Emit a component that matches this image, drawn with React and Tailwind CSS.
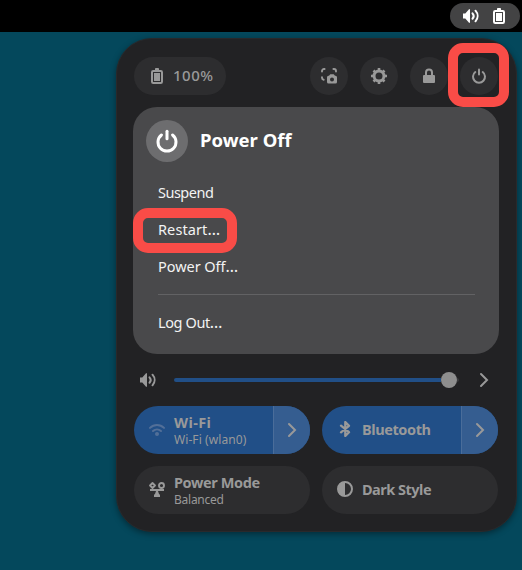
import React from 'react';

function Svg({ size = 16, className = '', children }) {
  return (
    <svg width={size} height={size} viewBox="0 0 16 16" fill="none" className={'shrink-0 ' + className}>
      {children}
    </svg>
  );
}

function VolumeIcon(props) {
  return (
    <Svg {...props}>
      <path d="M0 5.500h2.300L6 1.200h1v13.600H6L2.300 10.500H0z" fill="currentColor" />
      <path d="M9.500 5.300a4 4 0 0 1 0 5.400M12.500 2.700c2.800 3.100 2.800 7.500 0 10.600" stroke="currentColor" strokeWidth="2" strokeLinecap="round" />
    </Svg>
  );
}

function BatteryIcon(props) {
  return (
    <Svg {...props}>
      <rect x="6" y="0" width="4" height="3" rx="0.8" fill="currentColor" />
      <rect x="3" y="3" width="10" height="12" rx="1.200" stroke="currentColor" strokeWidth="2" />
      <rect x="5" y="5" width="6" height="8" fill="currentColor" />
    </Svg>
  );
}

function PowerIcon(props) {
  return (
    <Svg {...props}>
      <path d="M4.300 4a6 6 0 1 0 7.400 0" stroke="currentColor" strokeWidth="2" strokeLinecap="round" />
      <path d="M8 1.500v5" stroke="currentColor" strokeWidth="2" strokeLinecap="round" />
    </Svg>
  );
}

function ScreenshotIcon(props) {
  return (
    <Svg {...props}>
      <path d="M1 3.600V3a2 2 0 0 1 2-2h.6M12.400 1h.6a2 2 0 0 1 2 2v.6M1 9.200v.5a2.200 2.200 0 0 0 1.700 2.100" stroke="currentColor" strokeWidth="1.900" strokeLinecap="round" />
      <path fillRule="evenodd" d="M8 7.700 9.300 6.200h3.400L14 7.700h.5A1.500 1.500 0 0 1 16 9.200v4.800A1.500 1.500 0 0 1 14.500 15.500h-7A1.500 1.500 0 0 1 6 14V9.200a1.500 1.500 0 0 1 1.500-1.500zM11 9.500a2 2 0 1 0 0 4 2 2 0 0 0 0-4z" fill="currentColor" />
    </Svg>
  );
}

function GearIcon(props) {
  return (
    <Svg {...props}>
      <circle cx="8" cy="8" r="5" stroke="currentColor" strokeWidth="3" />
      <path d="M8 0v3M8 13v3M0 8h3M13 8h3M2.500 2.500l2 2M11.500 11.500l2 2M2.500 13.500l2-2M11.500 4.500l2-2" stroke="currentColor" strokeWidth="2.600" />
    </Svg>
  );
}

function LockIcon(props) {
  return (
    <Svg {...props}>
      <path d="M5 8V4.500a3 3 0 0 1 6 0V8" stroke="currentColor" strokeWidth="2" />
      <rect x="2" y="7" width="12" height="8" rx="1" fill="currentColor" />
    </Svg>
  );
}

function Chevron(props) {
  return (
    <Svg {...props}>
      <path d="M5 2l6 6-6 6" stroke="currentColor" strokeWidth="2" strokeLinecap="round" />
    </Svg>
  );
}

function WifiIcon(props) {
  return (
    <Svg {...props}>
      <path d="M1 5.900c4-3.900 10-3.900 14 0" stroke="currentColor" strokeWidth="2" strokeLinecap="round" />
      <path d="M4 9c2.300-2.100 5.700-2.100 8 0" stroke="currentColor" strokeWidth="2" strokeLinecap="round" />
      <circle cx="8" cy="12" r="2" fill="currentColor" />
    </Svg>
  );
}

function BluetoothIcon(props) {
  return (
    <Svg {...props}>
      <path d="M4 4.700l8 6.500L8.300 15V1L12 4.800l-8 6.500" stroke="currentColor" strokeWidth="2.300" strokeLinejoin="round" strokeLinecap="round" />
    </Svg>
  );
}

function BalanceIcon(props) {
  return (
    <Svg {...props}>
      <path d="M3.500 1L6 3.500 3.500 6 1 3.500z" stroke="currentColor" strokeWidth="1.800" strokeLinejoin="round" />
      <circle cx="12.500" cy="3.500" r="2.500" stroke="currentColor" strokeWidth="1.900" />
      <path d="M1 7h14v2H9l.8 2.500L11 13v2H5v-2l1.200-1.500L7 9H1z" fill="currentColor" />
    </Svg>
  );
}

function ContrastIcon(props) {
  return (
    <Svg {...props}>
      <circle cx="8" cy="8" r="7" stroke="currentColor" strokeWidth="2" />
      <path d="M8 1a7 7 0 0 0 0 14z" fill="currentColor" />
    </Svg>
  );
}

function RoundButton({ label, children }) {
  return (
    <button aria-label={label} className="flex size-[38px] items-center justify-center rounded-full bg-[#2d2d2f]">
      {children}
    </button>
  );
}

function Tile({ icon, title, titleClass, subtitle, subtitleClass, active }) {
  return (
    <div className={'flex h-12 overflow-hidden rounded-full ' + (active ? 'bg-[#214f87]' : 'bg-[#2d2d2f]')}>
      <div className="flex min-w-0 flex-1 items-center gap-2 pl-[15px]">
        {icon}
        <div className={'flex flex-col pl-px whitespace-nowrap ' + (subtitle ? 'pt-0.5' : 'pb-0.5')}>
          <span className={'text-[14.500px] leading-[17px] font-bold ' + titleClass}>{title}</span>
          {subtitle && <span className={'text-[12px] leading-[17px] ' + subtitleClass}>{subtitle}</span>}
        </div>
      </div>
      {active && (
        <div className="flex w-[37px] items-center justify-center border-l border-[#4a6d9a] bg-[#355d90]">
          <Chevron />
        </div>
      )}
    </div>
  );
}

function Ellipsis() {
  return <span className="text-[16px] leading-none">…</span>;
}

export default function App() {
  return (
    <div className="flex h-[570px] w-[522px] flex-col overflow-hidden bg-[#04485c] font-['Noto_Sans',sans-serif] text-[#999999]">
      <header className="flex h-8 shrink-0 items-start justify-end bg-black pt-[3px] pr-0.5">
        <div className="flex h-[26px] w-[70px] items-center gap-3 rounded-full bg-[#434344] pl-[13px] text-white">
          <VolumeIcon />
          <BatteryIcon />
        </div>
      </header>

      <main className="mt-1.5 ml-[116px] h-[494px] w-[401px] rounded-[36px] border border-[#29292b] bg-[#222224] px-[17px] pt-[18px] shadow-[0_2px_6px_rgba(0,0,0,0.4)]">
        <div className="flex items-center justify-between">
          <div className="flex h-[38px] w-[92px] items-center gap-2 rounded-full bg-[#2d2d2f] pl-[15px]">
            <BatteryIcon />
            <span className="pb-px text-[15px] font-medium tracking-[0.5px]">100%</span>
          </div>
          <div className="mr-px flex gap-3">
            <RoundButton label="Screenshot"><ScreenshotIcon /></RoundButton>
            <RoundButton label="Settings"><GearIcon /></RoundButton>
            <RoundButton label="Lock"><LockIcon /></RoundButton>
            <div className="relative">
              <RoundButton label="Power"><PowerIcon /></RoundButton>
              <div className="absolute -top-[14px] -left-3 h-16 w-[61px] rounded-[15px] border-[10px] border-[#f94c47]" />
            </div>
          </div>
        </div>

        <section className="mt-3 -ml-px h-[247px] w-[366px] rounded-[24px] bg-[#49494b] px-[13px] pt-[13px] text-[#f3f3f3]">
          <div className="flex items-center gap-3">
            <div className="flex size-[42px] items-center justify-center rounded-full bg-[#6d6d6f] pb-px text-white">
              <PowerIcon size={24} />
            </div>
            <h1 className="pb-0.5 text-[18.500px] leading-6 font-bold text-white">Power Off</h1>
          </div>
          <ul className="mt-3 px-3 text-[14.500px]">
            <li className="flex h-[37px] items-center"><span className="tracking-[-0.5px]">Suspend</span></li>
            <li className="relative flex h-[37px] items-center">
              <span className="tracking-[0.1px]">Restart<Ellipsis /></span>
              <div className="absolute -top-[3px] -left-[25px] h-[45px] w-[104px] rounded-[15px] border-[10px] border-[#f94c47]" />
            </li>
            <li className="flex h-[37px] items-center"><span className="tracking-[-0.05px]">Power Off<Ellipsis /></span></li>
            <li className="mt-[9px] mr-[-1px] h-px bg-[#626264]" />
            <li className="mt-[9px] flex h-[37px] items-center"><span className="tracking-[-0.4px]">Log Out<Ellipsis /></span></li>
          </ul>
        </section>

        <div className="mt-[18px] flex h-4 items-center pl-1.5">
          <VolumeIcon />
          <div className="ml-[18px] flex h-4 w-[285px] items-center">
            <div className="h-1 flex-1 rounded-l-full bg-[#214f87]" />
            <div className="size-4 rounded-full bg-[#8e8e8e]" />
            <div className="h-1 w-0.5 rounded-r-full bg-[#39393b]" />
          </div>
          <Chevron className="ml-[17px]" />
        </div>

        <div className="mt-[18px] grid w-[364px] grid-cols-2 gap-3">
          <Tile active icon={<WifiIcon className="text-[#526f98]" />} title="Wi-Fi" titleClass="tracking-[0.4px]" subtitle="Wi-Fi (wlan0)" subtitleClass="tracking-[0.08px]" />
          <Tile active icon={<BluetoothIcon className="mb-0.5" />} title="Bluetooth" titleClass="tracking-[-0.4px]" />
          <Tile icon={<BalanceIcon />} title="Power Mode" titleClass="tracking-[-0.4px]" subtitle="Balanced" subtitleClass="tracking-[-0.25px]" />
          <Tile icon={<ContrastIcon className="mb-0.5" />} title="Dark Style" titleClass="tracking-[-0.5px]" />
        </div>
      </main>
    </div>
  );
}
